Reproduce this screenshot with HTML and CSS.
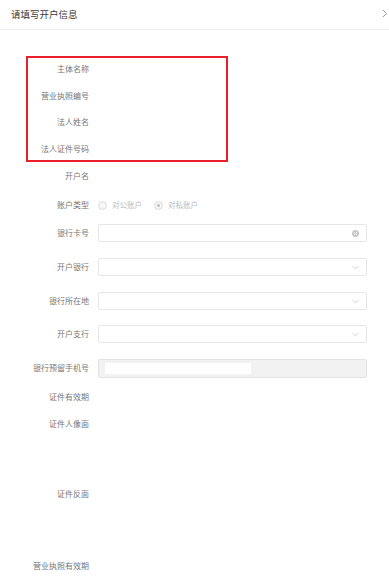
FILE: index.html
```html
<!DOCTYPE html>
<html lang="zh-CN">
<head>
<meta charset="utf-8">
<title>请填写开户信息</title>
<link rel="stylesheet" href="styles.css">
</head>
<body>
<div class="header">
  <span class="title">请填写开户信息</span>
  <svg class="chev" width="6" height="9" viewBox="0 0 6 9"><path d="M1 1 L4.5 4.5 L1 8" fill="none" stroke="#999" stroke-width="1"/></svg>
</div>
<div class="form">
  <div class="label r1">主体名称</div>
  <div class="label r2">营业执照编号</div>
  <div class="label r3">法人姓名</div>
  <div class="label r4">法人证件号码</div>
  <div class="highlight"></div>

  <div class="label r5">开户名</div>

  <div class="label r6">账户类型</div>
  <div class="radios r6">
    <span class="radio"></span><span class="rtext">对公账户</span>
    <span class="radio checked"></span><span class="rtext">对私账户</span>
  </div>

  <div class="label r7">银行卡号</div>
  <div class="field r7"><span class="clear"><svg width="7" height="7" viewBox="0 0 7 7"><circle cx="3.5" cy="3.5" r="3.5" fill="#c8c8c8"/><path d="M2.2 2.2 L4.8 4.8 M4.8 2.2 L2.2 4.8" stroke="#fff" stroke-width="0.8"/></svg></span></div>

  <div class="label r8">开户银行</div>
  <div class="field r8"><svg class="down" width="7" height="5" viewBox="0 0 7 5"><path d="M0.5 1 L3.5 4 L6.5 1" fill="none" stroke="#c8c8c8" stroke-width="0.8"/></svg></div>

  <div class="label r9">银行所在地</div>
  <div class="field r9"><svg class="down" width="7" height="5" viewBox="0 0 7 5"><path d="M0.5 1 L3.5 4 L6.5 1" fill="none" stroke="#c8c8c8" stroke-width="0.8"/></svg></div>

  <div class="label r10">开户支行</div>
  <div class="field r10"><svg class="down" width="7" height="5" viewBox="0 0 7 5"><path d="M0.5 1 L3.5 4 L6.5 1" fill="none" stroke="#c8c8c8" stroke-width="0.8"/></svg></div>

  <div class="label r11">银行预留手机号</div>
  <div class="field disabled r11"><span class="masked"></span></div>

  <div class="label r12">证件有效期</div>
  <div class="label r13">证件人像面</div>
  <div class="label r14">证件反面</div>
  <div class="label r15">营业执照有效期</div>
</div>
</body>
</html>
```

FILE: styles.css
```css
html, body {
  margin: 0;
  padding: 0;
  background: #fff;
  font-family: "Noto Sans CJK SC", "Noto Sans", sans-serif;
}
body {
  width: 389px;
  height: 579px;
  overflow: hidden;
}
.header {
  height: 30px;
  box-sizing: border-box;
  border-bottom: 1px solid #f0f0f0;
  display: flex;
  align-items: center;
  justify-content: space-between;
  padding: 0 1px 2px 11px;
}
.title {
  font-size: 9.5px;
  color: #3a3a3a;
}
.chev {
  display: block;
}
.form {
  display: grid;
  grid-template-columns: 89px 269px;
  column-gap: 9px;
  grid-template-rows: 26.7px 26.3px 27px 26.7px 29.6px 28px 34.2px 33.8px 33px 33.9px 28.5px 27.3px 70px 71.7px 18px;
  align-items: start;
  padding-top: 30px;
}
.label {
  grid-column: 1;
  font-size: 8px;
  color: #777;
  text-align: right;
  height: 18px;
  line-height: 18px;
  white-space: nowrap;
}
.r1 { grid-row: 1; }
.r2 { grid-row: 2; }
.r3 { grid-row: 3; }
.r4 { grid-row: 4; }
.r5 { grid-row: 5; }
.r6 { grid-row: 6; }
.r7 { grid-row: 7; }
.r8 { grid-row: 8; }
.r9 { grid-row: 9; }
.r10 { grid-row: 10; }
.r11 { grid-row: 11; }
.r12 { grid-row: 12; }
.r13 { grid-row: 13; }
.r14 { grid-row: 14; }
.r15 { grid-row: 15; }
.highlight {
  grid-column: 1 / -1;
  grid-row: 1 / 5;
  justify-self: start;
  margin-left: 26px;
  margin-top: -4.3px;
  width: 202px;
  height: 106px;
  box-sizing: border-box;
  border: 2px solid #e8202a;
  pointer-events: none;
}
.radios {
  grid-column: 2;
  height: 18px;
  display: flex;
  align-items: center;
}
.radio {
  width: 7px;
  height: 7px;
  border-radius: 50%;
  border: 1px solid #dcdcdc;
  background: #f6f6f6;
  position: relative;
  flex: none;
}
.radio.checked::after {
  content: "";
  position: absolute;
  left: 2px;
  top: 2px;
  width: 3px;
  height: 3px;
  border-radius: 50%;
  background: #bdbdbd;
}
.rtext {
  font-size: 7.5px;
  color: #bbb;
  margin-left: 5px;
  margin-right: 12px;
  line-height: 10px;
}
.field {
  grid-column: 2;
  height: 18px;
  box-sizing: border-box;
  border: 1px solid #e6e6e6;
  border-radius: 2px;
  background: #fff;
  display: flex;
  align-items: center;
  justify-content: flex-end;
  padding-right: 7px;
}
.clear {
  display: flex;
}
.clear svg, .down {
  display: block;
}
.field.disabled {
  background: #f2f2f2;
  border-color: #e2e2e2;
  justify-content: flex-start;
  padding-left: 6px;
  height: 18.5px;
}
.masked {
  width: 146px;
  height: 11px;
  background: #fff;
}
```
